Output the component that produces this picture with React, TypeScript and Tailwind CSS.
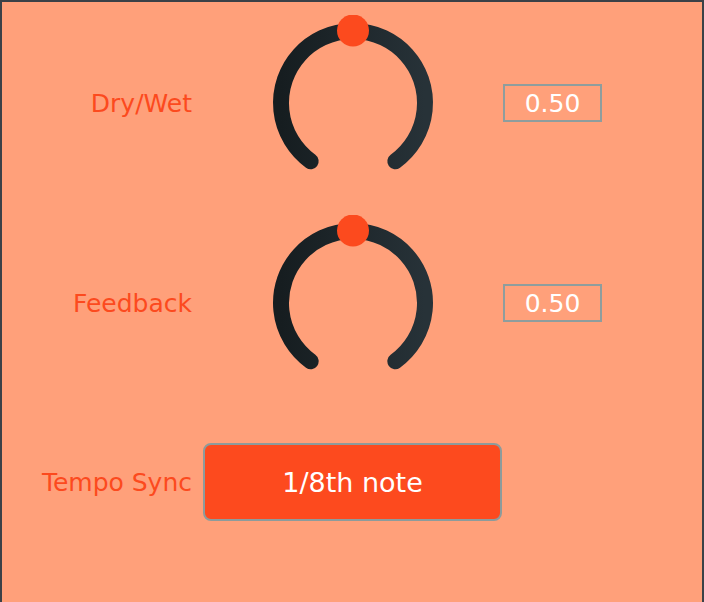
import React from "react";

const FONT = { fontFamily: '"DejaVu Sans", sans-serif' };

function Knob({ id }: { id: string }) {
  // rotary arc from -144deg to +144deg around top, radius 72
  return (
    <svg width="176" height="176" viewBox="0 0 176 176" className="shrink-0">
      <defs>
        <linearGradient id={id} x1="0" y1="0" x2="1" y2="0">
          <stop offset="0" stopColor="#161d20" />
          <stop offset="1" stopColor="#273238" />
        </linearGradient>
      </defs>
      <path
        d="M 45.68 146.25 A 72 72 0 1 1 130.32 146.25"
        fill="none"
        stroke={`url(#${id})`}
        strokeWidth="16"
        strokeLinecap="round"
      />
      <circle cx="88" cy="15.5" r="16" fill="#fc4a1e" />
    </svg>
  );
}

function KnobRow({ label, value, id, className }: { label: string; value: string; id: string; className: string }) {
  return (
    <div className={`flex items-center h-[176px] ${className}`}>
      <div className="w-[190px] text-right text-[25px] text-[#fc4a1e] leading-none">{label}</div>
      <div className="ml-[73px]">
        <Knob id={id} />
      </div>
      <div className="ml-[62px] w-[99px] h-[38px] border-2 border-[#8e9d9d] flex items-center justify-center text-white text-[25px] leading-none">
        {value}
      </div>
    </div>
  );
}

export default function App() {
  return (
    <div
      className="w-[704px] h-[602px] bg-[#ffa07a] border-t-2 border-l-2 border-r-2 border-[#3b4147] flex flex-col"
      style={FONT}
    >
      <KnobRow label="Dry/Wet" value="0.50" id="g1" className="mt-[13px]" />
      <KnobRow label="Feedback" value="0.50" id="g2" className="mt-[24px]" />
      <div className="flex items-center mt-[52px]">
        <div className="w-[190px] text-right text-[25px] text-[#fc4a1e] leading-none">Tempo Sync</div>
        <button className="ml-[11px] w-[299px] h-[78px] rounded-lg border-2 border-[#8d9b9b] bg-[#fd4a1e] text-white text-[27px] leading-none flex items-center justify-center">
          1/8th note
        </button>
      </div>
    </div>
  );
}
